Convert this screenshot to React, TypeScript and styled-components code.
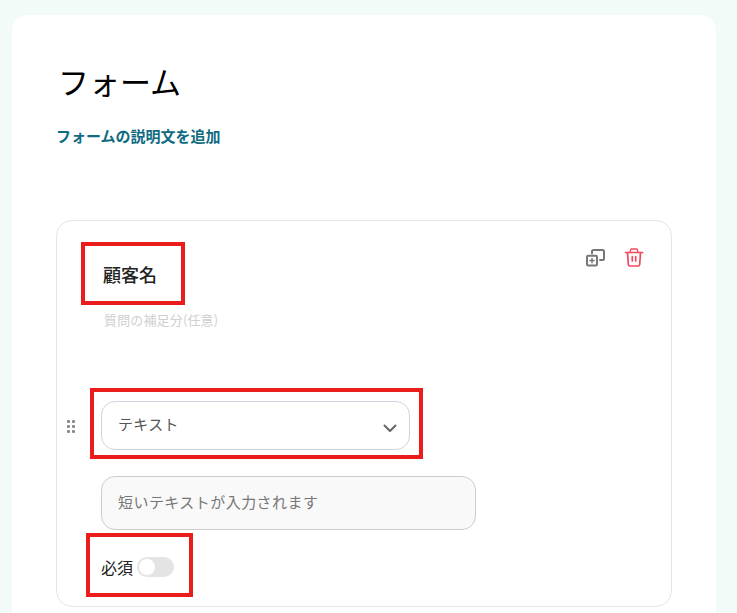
import React, { FC } from 'react';
import styled, { createGlobalStyle } from 'styled-components';

const GlobalStyle = createGlobalStyle`
  html, body {
    margin: 0;
    padding: 0;
    height: 613px;
    overflow: hidden;
    background: #f3fbf9;
    font-family: "Noto Sans CJK JP", "Noto Sans", sans-serif;
  }
`;

const Page = styled.div`
  padding: 15px 21px 0 12px;
`;

const Sheet = styled.main`
  background: #fff;
  border-radius: 16px 16px 0 0;
  padding: 44px 44px 0 44px;
  height: 598px;
  box-sizing: border-box;
`;

const Title = styled.h1`
  margin: 0 0 0 2px;
  font-size: 31px;
  font-weight: 400;
  line-height: 44px;
  color: #000;
`;

const Description = styled.p`
  margin: 22px 0 0;
  font-size: 15px;
  font-weight: 700;
  line-height: 22px;
  color: #0f6b82;
`;

const QuestionCard = styled.section`
  position: relative;
  margin-top: 73px;
  height: 387px;
  box-sizing: border-box;
  border: 1px solid #e5e5e5;
  border-radius: 16px;
  padding: 40px 26px 0 44px;
`;

const QuestionHead = styled.div`
  display: flex;
  justify-content: space-between;
  align-items: flex-start;
`;

const QuestionName = styled.h2`
  margin: 0 0 0 2px;
  font-size: 18px;
  font-weight: 500;
  line-height: 26px;
  color: #222;
`;

const Actions = styled.div`
  display: flex;
  gap: 18px;
  margin-top: -13px;
`;

const IconButton = styled.span`
  display: block;
  width: 21px;
  height: 21px;
`;

const Helper = styled.p`
  margin: 23px 0 0 3px;
  font-size: 13px;
  line-height: 20px;
  letter-spacing: 0.15px;
  color: #cfcfcf;
`;

const SelectRow = styled.div`
  position: relative;
  margin-top: 71px;
`;

const DragHandle = styled.span`
  position: absolute;
  left: -34px;
  top: 19px;
  display: grid;
  grid-template-columns: 3px 3px;
  gap: 2px 1.5px;

  i {
    width: 3px;
    height: 3px;
    background: #8a8a8a;
    border-radius: 1px;
  }
`;

const Select = styled.div`
  display: flex;
  justify-content: space-between;
  width: 309px;
  height: 49px;
  box-sizing: border-box;
  border: 1px solid #d0d5dd;
  border-radius: 14px;
  padding: 10px 12px 0 16px;
  font-size: 15px;
  line-height: 24px;
  letter-spacing: 0.3px;
  color: #555;

  svg {
    margin-top: 12px;
  }
`;

const TextPreview = styled.div`
  margin-top: 26px;
  width: 375px;
  height: 54px;
  box-sizing: border-box;
  border: 1px solid #ccc;
  border-radius: 14px;
  background: #f9f9f9;
  padding: 13px 16px 0;
  font-size: 15px;
  line-height: 24px;
  letter-spacing: 0.45px;
  color: #777;
`;

const RequiredRow = styled.div`
  display: flex;
  align-items: center;
  gap: 4px;
  margin-top: 27px;
  font-size: 16px;
  line-height: 20px;
  color: #222;
`;

const Toggle = styled.span`
  position: relative;
  display: block;
  width: 37px;
  height: 20px;
  border-radius: 10px;
  background: #e4e4e4;

  &::after {
    content: '';
    position: absolute;
    left: 2px;
    top: 2px;
    width: 16px;
    height: 16px;
    border-radius: 50%;
    background: #fff;
  }
`;

const Callout = styled.div<{ $left: number; $top: number; $width: number; $height: number }>`
  position: absolute;
  left: ${(p) => p.$left}px;
  top: ${(p) => p.$top}px;
  width: ${(p) => p.$width}px;
  height: ${(p) => p.$height}px;
  box-sizing: border-box;
  border: 4px solid #ea1c1c;
`;

const CopyIcon: FC = () => (
  <svg width="21" height="21" viewBox="0 0 21 21" fill="none" stroke="#777" strokeWidth="2" strokeLinejoin="round" strokeLinecap="round">
    <path d="M7 5.500V3.500A1.500 1.500 0 0 1 8.500 2h9A1.500 1.500 0 0 1 19 3.500v7A1.500 1.500 0 0 1 17.500 12H15" />
    <rect x="2" y="7.700" width="10" height="9.800" rx="1.200" />
    <path d="M7 10.500v4.200M4.900 12.600h4.200" strokeWidth="1.500" />
  </svg>
);

const TrashIcon: FC = () => (
  <svg width="21" height="21" viewBox="0 0 21 21" fill="none" stroke="#f5475e" strokeWidth="1.700" strokeLinejoin="round" strokeLinecap="round">
    <path d="M1.500 4.500h17" />
    <path d="M6 4.500l.6-2.700A1 1 0 0 1 7.600 1h4.800a1 1 0 0 1 1 .8l.6 2.700" strokeWidth="1.300" />
    <path d="M3.500 4.500l.8 12A1.600 1.600 0 0 0 5.900 18h8.200a1.600 1.600 0 0 0 1.600-1.500l.8-12" />
    <path d="M8.300 8.500v4.500M11.700 8.500v4.500" />
  </svg>
);

const Chevron: FC = () => (
  <svg width="14" height="9" viewBox="0 0 14 9" fill="none" stroke="#666" strokeWidth="2" strokeLinecap="round" strokeLinejoin="round">
    <path d="M1.500 1.500L7 7l5.500-5.500" />
  </svg>
);

export default function App() {
  return (
    <>
      <GlobalStyle />
      <Page>
        <Sheet>
          <Title>フォーム</Title>
          <Description>フォームの説明文を追加</Description>
          <QuestionCard>
            <QuestionHead>
              <QuestionName>顧客名</QuestionName>
              <Actions>
                <IconButton><CopyIcon /></IconButton>
                <IconButton><TrashIcon /></IconButton>
              </Actions>
            </QuestionHead>
            <Helper>質問の補足分(任意)</Helper>
            <SelectRow>
              <DragHandle>
                {Array.from({ length: 6 }, (_, i) => <i key={i} />)}
              </DragHandle>
              <Select>
                テキスト
                <Chevron />
              </Select>
            </SelectRow>
            <TextPreview>短いテキストが入力されます</TextPreview>
            <RequiredRow>
              必須
              <Toggle />
            </RequiredRow>
          </QuestionCard>
        </Sheet>
      </Page>
      <Callout $left={81} $top={242} $width={104} $height={63} />
      <Callout $left={90} $top={388} $width={333} $height={71} />
      <Callout $left={86} $top={533} $width={107} $height={64} />
    </>
  );
}
